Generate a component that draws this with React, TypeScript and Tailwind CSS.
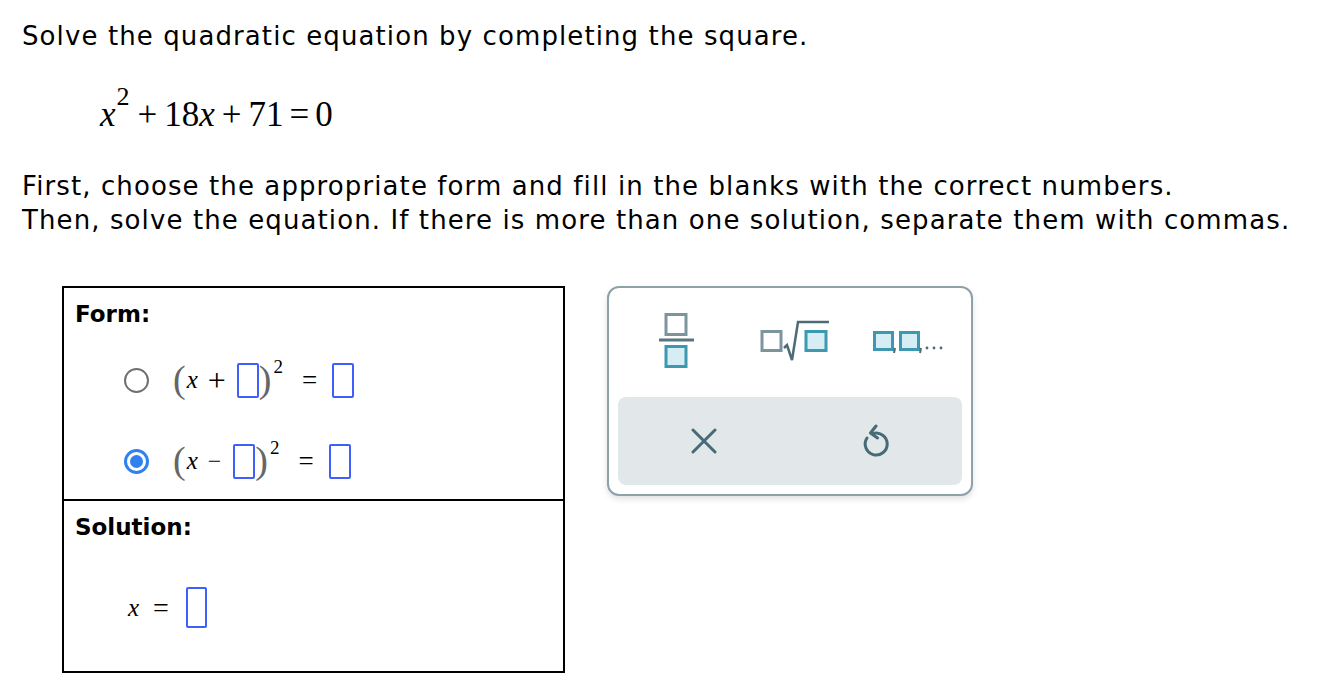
import React from "react";

const sans = { fontFamily: '"DejaVu Sans", Verdana, sans-serif' };
const serif = { fontFamily: '"Liberation Serif", "Times New Roman", serif' };

function Blank({ tall }: { tall?: boolean }) {
  return (
    <span
      className={
        "inline-block rounded-[2px] border-2 border-[#3f5ffb] bg-white " +
        (tall ? "h-[41px] w-[21px]" : "h-[35px] w-[22px]")
      }
    />
  );
}

function Radio({ checked }: { checked?: boolean }) {
  if (checked) {
    return (
      <span className="flex h-[25px] w-[25px] items-center justify-center rounded-full border-[3px] border-[#2f80f0] bg-white">
        <span className="h-[13px] w-[13px] rounded-full bg-[#2f80f0]" />
      </span>
    );
  }
  return <span className="block h-[25px] w-[25px] rounded-full border-2 border-[#707070] bg-white" />;
}

function FormRow({ sign, checked }: { sign: string; checked?: boolean }) {
  const plus = sign === "+";
  return (
    <div className="flex items-center" style={serif}>
      <Radio checked={checked} />
      <span className="ml-[24px] flex items-center text-[25px] text-black">
        <span className="relative -top-[1px] text-[38px] leading-none text-[#666]">(</span>
        <span className="ml-[1px] italic">x</span>
        <span className={plus ? "ml-[10px] mr-[11px] text-[32px] leading-none" : "ml-[10px] mr-[12px] text-[24px] leading-none"}>{sign}</span>
        <Blank />
        <span className="relative -top-[1px] text-[38px] leading-none text-[#666]">)</span>
        <span className="relative -top-[14px] ml-[2px] text-[19px] leading-none">2</span>
        <span className="ml-[19px] mr-[15px] text-[27px] leading-none">=</span>
        <Blank />
      </span>
    </div>
  );
}

function FracIcon() {
  return (
    <svg width="36" height="56" viewBox="0 0 36 56">
      <rect x="7" y="1.5" width="20" height="20" fill="#fff" stroke="#7c959d" strokeWidth="3" />
      <line x1="0" y1="27" x2="35" y2="27" stroke="#587680" strokeWidth="3" />
      <rect x="7" y="33.5" width="20" height="20" fill="#d6eef3" stroke="#3d98b1" strokeWidth="3" />
    </svg>
  );
}

function SqrtIcon() {
  return (
    <svg width="70" height="42" viewBox="0 0 70 42">
      <rect x="2" y="11.5" width="19" height="19" fill="#fff" stroke="#7c959d" strokeWidth="3" />
      <path d="M24 28 L27 25 L32 40 L38 2 L69 2" fill="none" stroke="#4b6b77" strokeWidth="2.5" />
      <rect x="46" y="11.5" width="20" height="19" fill="#d6eef3" stroke="#3d98b1" strokeWidth="3" />
    </svg>
  );
}

function ListIcon() {
  return (
    <svg width="74" height="26" viewBox="0 0 74 26">
      <rect x="1.5" y="1.5" width="18" height="17" fill="#d6eef3" stroke="#3d98b1" strokeWidth="3" />
      <path d="M22 17 L21 22" stroke="#4b6b77" strokeWidth="2" />
      <rect x="27.5" y="1.5" width="18" height="17" fill="#d6eef3" stroke="#3d98b1" strokeWidth="3" />
      <path d="M48 17 L47 22" stroke="#4b6b77" strokeWidth="2" />
      <circle cx="54" cy="17" r="1.4" fill="#4b6b77" />
      <circle cx="61" cy="17" r="1.4" fill="#4b6b77" />
      <circle cx="68" cy="17" r="1.4" fill="#4b6b77" />
    </svg>
  );
}

export default function App() {
  return (
    <div className="min-h-[696px] w-[1322px] bg-white pl-[22px] pt-[19px] text-black" style={sans}>
      <p className="text-[26px] leading-[34px] tracking-[1.1px]">Solve the quadratic equation by completing the square.</p>

      <div className="ml-[78px] mt-[42px] flex items-baseline text-[35px] leading-[40px]" style={serif}>
        <span className="italic">x</span>
        <span className="relative -top-[21px] ml-[1px] text-[26px] leading-none">2</span>
        <span className="ml-[8px] mr-[7px]">+</span>
        <span>18</span>
        <span className="italic">x</span>
        <span className="ml-[7px] mr-[7px]">+</span>
        <span>71</span>
        <span className="mx-[6px]">=</span>
        <span>0</span>
      </div>

      <div className="mt-[34px] text-[26px] leading-[34px] tracking-[1.1px]">
        <p>First, choose the appropriate form and fill in the blanks with the correct numbers.</p>
        <p>Then, solve the equation. If there is more than one solution, separate them with commas.</p>
      </div>

      <div className="mt-[49px] flex items-start">
        <div className="ml-[40px] w-[503px] border-2 border-black">
          <div className="h-[211px] px-[11px] pt-[12px]">
            <div className="text-[23px] font-bold leading-[28px]">Form:</div>
            <div className="ml-[49px] mt-[33px] flex flex-col gap-[43px]">
              <FormRow sign="+" />
              <FormRow sign="−" checked />
            </div>
          </div>
          <div className="h-[172px] border-t-2 border-black px-[11px] pt-[12px]">
            <div className="text-[23px] font-bold leading-[28px]">Solution:</div>
            <div className="ml-[53px] mt-[46px] flex items-center text-[25px]" style={serif}>
              <span className="italic">x</span>
              <span className="ml-[14px] mr-[17px] text-[28px] leading-none">=</span>
              <Blank tall />
            </div>
          </div>
        </div>

        <div className="ml-[42px] w-[366px] rounded-[12px] border-2 border-[#8fa1a8] bg-white p-[9px] shadow-[0_3px_6px_rgba(0,0,0,0.12)]">
          <div className="flex h-[100px] items-start pt-[16px]">
            <div className="flex w-[117px] justify-center">
              <FracIcon />
            </div>
            <div className="mt-[7px] flex w-[120px] justify-center">
              <SqrtIcon />
            </div>
            <div className="mt-[18px] flex flex-1 justify-center pl-[2px]">
              <ListIcon />
            </div>
          </div>
          <div className="flex h-[88px] items-center rounded-[8px] bg-[#e2e7ea]">
            <div className="flex flex-1 justify-center">
              <svg width="26" height="26" viewBox="0 0 26 26">
                <path d="M2 2 L24 24 M24 2 L2 24" stroke="#466a76" strokeWidth="3" strokeLinecap="round" />
              </svg>
            </div>
            <div className="flex flex-1 justify-center">
              <svg width="28" height="34" viewBox="0 0 28 34">
                <path d="M5 14 A11 11 0 1 0 11 9.5" fill="none" stroke="#466a76" strokeWidth="3" strokeLinecap="round" />
                <path d="M14 2 L8.5 9 L15.5 14" fill="none" stroke="#466a76" strokeWidth="3" strokeLinecap="round" strokeLinejoin="round" />
              </svg>
            </div>
          </div>
        </div>
      </div>
    </div>
  );
}
